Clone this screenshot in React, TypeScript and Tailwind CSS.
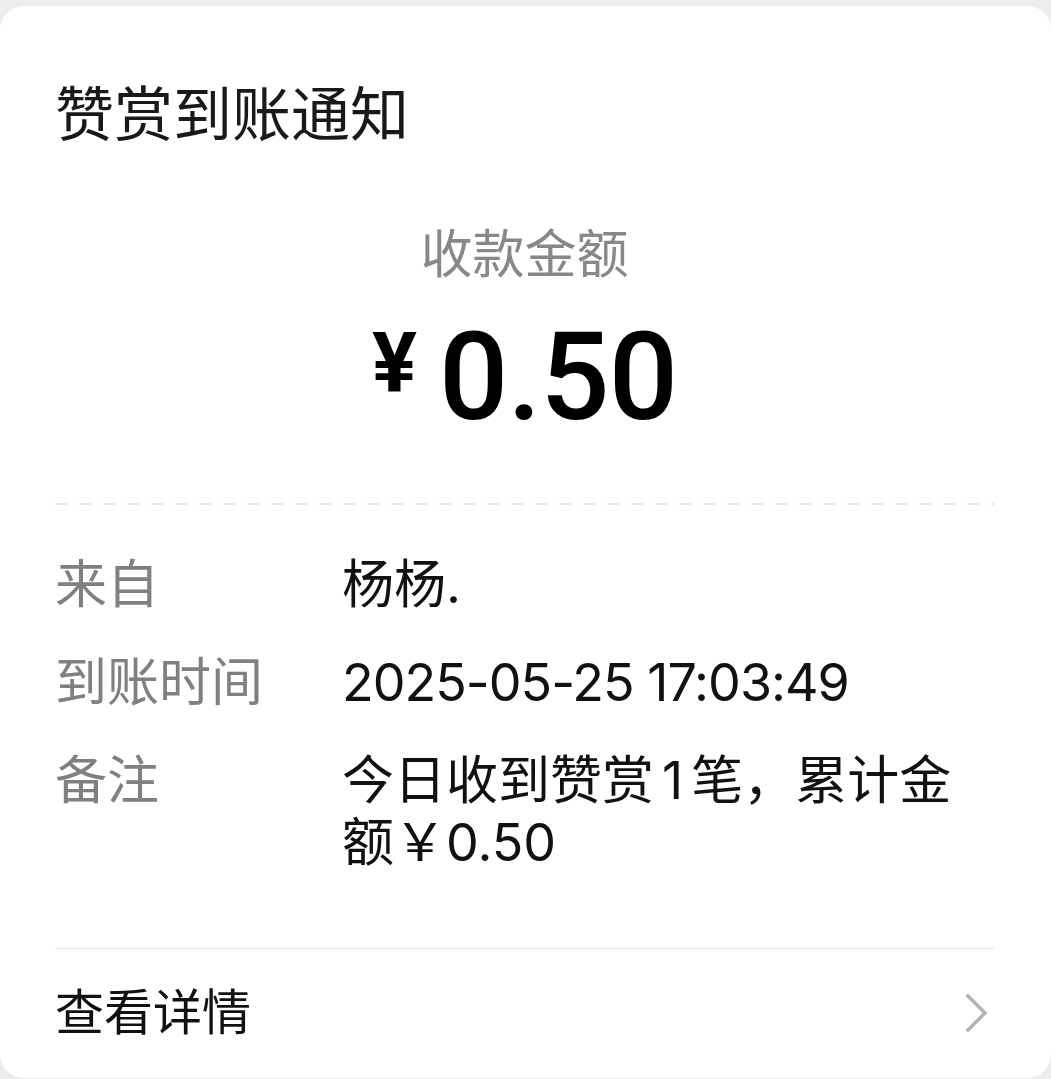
import React from 'react';

const FONT = "font-['Inter','Noto_Sans_CJK_SC',sans-serif]";

function InfoRow({ label, children }: { label: string; children: React.ReactNode }) {
  return (
    <div className="flex text-[52px] leading-[62px]">
      <div className="w-[287px] shrink-0 text-[#808080]">{label}</div>
      <div className="flex-1 text-[#111111]">{children}</div>
    </div>
  );
}

export default function App() {
  return (
    <div className={`min-h-screen bg-[#ededed] pt-[6px] ${FONT}`}>
      <div className="rounded-[24px] bg-white pl-[55px] pr-[57px] pt-[69px] pb-[34px]">
        <h1 className="text-[59px] leading-[80px] font-normal text-[#191919]">赞赏到账通知</h1>

        <div className="mt-[65px] text-center text-[52px] leading-[70px] text-[#888888]">收款金额</div>

        <div className="mt-[27px] flex justify-center font-['Roboto','Inter',sans-serif] text-black">
          <span className="mt-[5px] mr-[22px] text-[84px] leading-none font-bold">¥</span>
          <span className="text-[122px] leading-none font-medium tracking-[-1px]">0.50</span>
        </div>

        <div className="mt-[64px] h-[2px] bg-[repeating-linear-gradient(to_right,#e6e6e6_0_12px,transparent_12px_24px)]" />

        <div className="mt-[49px] flex flex-col gap-[36px]">
          <InfoRow label="来自">杨杨.</InfoRow>
          <InfoRow label="到账时间">
            <span className="tracking-[-1px]">2025-05-25 17:03:49</span>
          </InfoRow>
          <InfoRow label="备注">
            今日收到赞赏<span className="px-[8px]">1</span>笔，累计金
            <br />
            额￥0.50
          </InfoRow>
        </div>

        <div className="mt-[74px] h-px bg-[#e5e5e5]" />

        <div className="mt-[33px] flex items-center justify-between">
          <span className="text-[49px] leading-[62px] text-[#111111]">查看详情</span>
          <svg width="24" height="40" viewBox="0 0 24 40" className="mr-[5px]" fill="none">
            <polyline points="3,3 20,20 3,37" stroke="#b2b2b2" strokeWidth="3.5" strokeLinecap="square" />
          </svg>
        </div>
      </div>
    </div>
  );
}
